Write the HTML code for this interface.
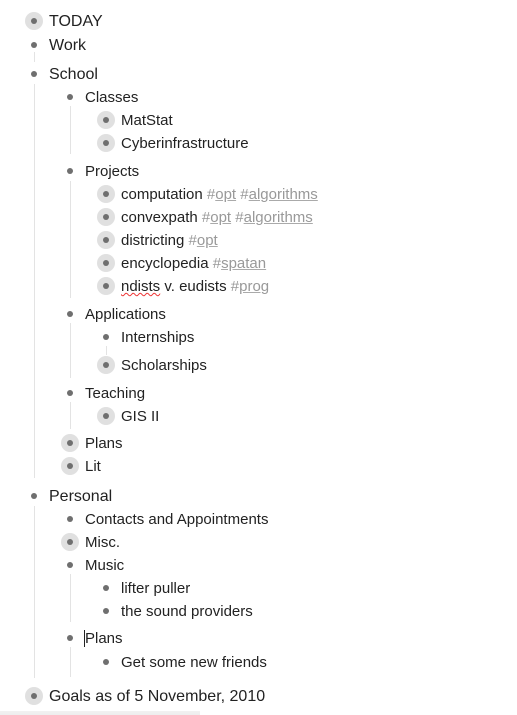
<!DOCTYPE html>
<html><head><meta charset="utf-8"><style>
body{margin:0;width:517px;height:715px;background:#fff;position:relative;overflow:hidden;font-family:"Liberation Sans",Arial,sans-serif;color:#222}
.r{position:absolute;height:20px;line-height:20px;font-size:15px;white-space:nowrap;margin-top:1px}
.r.l0{font-size:16px}
.b{position:absolute;width:18px;height:18px;border-radius:50%;}
.b.c{background:#e0e0e0}
.b::after{content:"";position:absolute;left:6px;top:6px;width:6px;height:6px;border-radius:50%;background:#6f6f6f}
.v{position:absolute;width:1px;background:#e3e3e3}
.t{color:#999}
.t u{text-decoration-color:#aaa}
.sp{text-decoration:underline wavy #e33;text-decoration-thickness:1px}
.shadow{position:absolute;left:0;top:711px;width:200px;height:4px;background:linear-gradient(#f2f2f2,#eee)}
</style></head><body>
<div class="v" style="left:34px;top:52px;height:10px"></div>
<div class="v" style="left:34px;top:84px;height:394px"></div>
<div class="v" style="left:34px;top:506px;height:172px"></div>
<div class="v" style="left:70px;top:106px;height:48px"></div>
<div class="v" style="left:70px;top:181px;height:117px"></div>
<div class="v" style="left:70px;top:323px;height:55px"></div>
<div class="v" style="left:106px;top:346px;height:9px"></div>
<div class="v" style="left:70px;top:402px;height:27px"></div>
<div class="v" style="left:70px;top:574px;height:48px"></div>
<div class="v" style="left:70px;top:647px;height:30px"></div>

<div class="b c" style="left:25px;top:12px"></div><div class="r l0" style="left:49px;top:11px">TODAY</div>
<div class="b" style="left:25px;top:36px"></div><div class="r l0" style="left:49px;top:35px">Work</div>
<div class="b" style="left:25px;top:65px"></div><div class="r l0" style="left:49px;top:64px">School</div>
<div class="b" style="left:61px;top:88px"></div><div class="r" style="left:85px;top:87px">Classes</div>
<div class="b c" style="left:97px;top:111px"></div><div class="r" style="left:121px;top:110px">MatStat</div>
<div class="b c" style="left:97px;top:134px"></div><div class="r" style="left:121px;top:133px">Cyberinfrastructure</div>
<div class="b" style="left:61px;top:162px"></div><div class="r" style="left:85px;top:161px">Projects</div>
<div class="b c" style="left:97px;top:185px"></div><div class="r" style="left:121px;top:184px">computation <span class="t">#<u>opt</u></span> <span class="t">#<u>algorithms</u></span></div>
<div class="b c" style="left:97px;top:208px"></div><div class="r" style="left:121px;top:207px">convexpath <span class="t">#<u>opt</u></span> <span class="t">#<u>algorithms</u></span></div>
<div class="b c" style="left:97px;top:231px"></div><div class="r" style="left:121px;top:230px">districting <span class="t">#<u>opt</u></span></div>
<div class="b c" style="left:97px;top:254px"></div><div class="r" style="left:121px;top:253px">encyclopedia <span class="t">#<u>spatan</u></span></div>
<div class="b c" style="left:97px;top:277px"></div><div class="r" style="left:121px;top:276px"><span class="sp">ndists</span> v. eudists <span class="t">#<u>prog</u></span></div>
<div class="b" style="left:61px;top:305px"></div><div class="r" style="left:85px;top:304px">Applications</div>
<div class="b" style="left:97px;top:328px"></div><div class="r" style="left:121px;top:327px">Internships</div>
<div class="b c" style="left:97px;top:356px"></div><div class="r" style="left:121px;top:355px">Scholarships</div>
<div class="b" style="left:61px;top:384px"></div><div class="r" style="left:85px;top:383px">Teaching</div>
<div class="b c" style="left:97px;top:407px"></div><div class="r" style="left:121px;top:406px">GIS II</div>
<div class="b c" style="left:61px;top:434px"></div><div class="r" style="left:85px;top:433px">Plans</div>
<div class="b c" style="left:61px;top:457px"></div><div class="r" style="left:85px;top:456px">Lit</div>
<div class="b" style="left:25px;top:487px"></div><div class="r l0" style="left:49px;top:486px">Personal</div>
<div class="b" style="left:61px;top:510px"></div><div class="r" style="left:85px;top:509px">Contacts and Appointments</div>
<div class="b c" style="left:61px;top:533px"></div><div class="r" style="left:85px;top:532px">Misc.</div>
<div class="b" style="left:61px;top:556px"></div><div class="r" style="left:85px;top:555px">Music</div>
<div class="b" style="left:97px;top:579px"></div><div class="r" style="left:121px;top:578px">lifter puller</div>
<div class="b" style="left:97px;top:602px"></div><div class="r" style="left:121px;top:601px">the sound providers</div>
<div class="b" style="left:61px;top:629px"></div><div class="r" style="left:85px;top:628px"><span style="border-left:1px solid #222;margin-left:-1px">Plans</span></div>
<div class="b" style="left:97px;top:653px"></div><div class="r" style="left:121px;top:652px">Get some new friends</div>
<div class="b c" style="left:25px;top:687px"></div><div class="r l0" style="left:49px;top:686px">Goals as of 5 November, 2010</div>
<div class="shadow"></div>
</body></html>
